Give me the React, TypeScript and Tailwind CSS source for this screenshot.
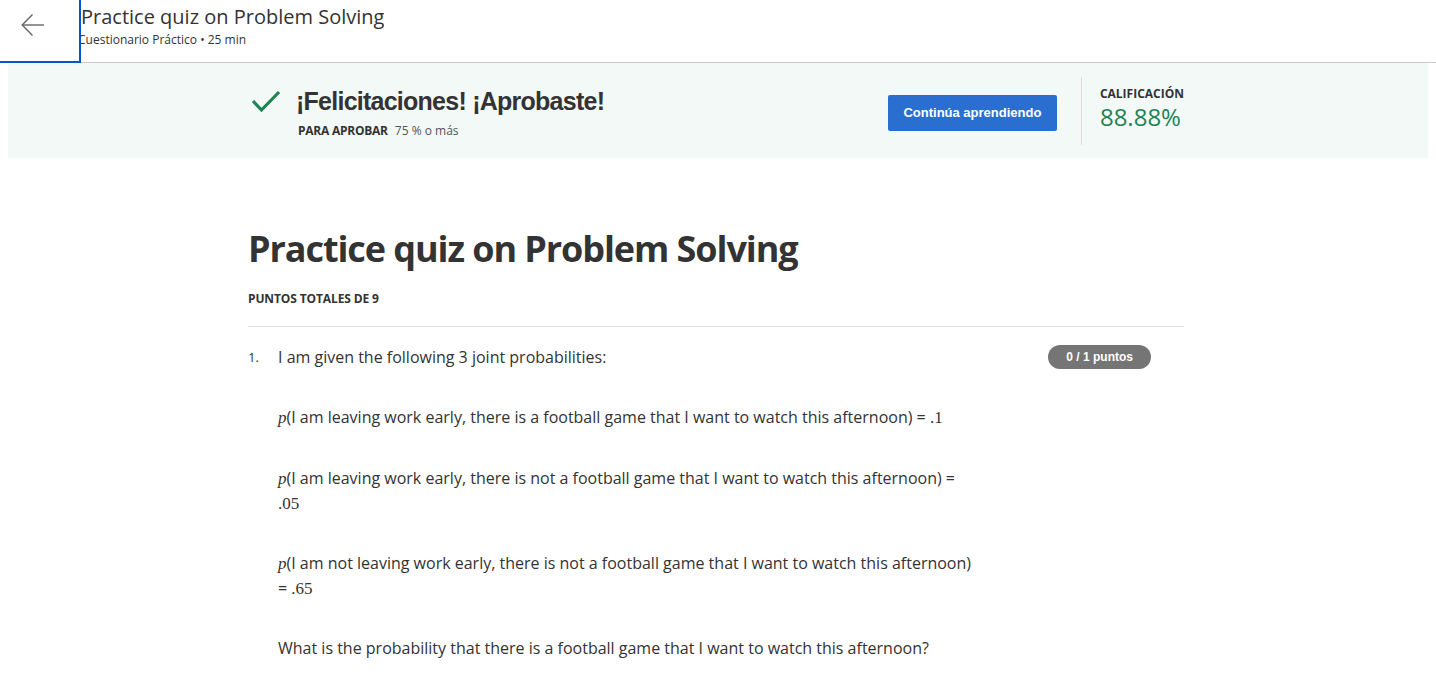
import React from 'react'

const sans = "font-['Open_Sans',sans-serif]"
const arial = "font-['Liberation_Sans',Arial,sans-serif]"

const ArrowLeft = () => (
  <svg width="24" height="24" viewBox="0 0 24 24" fill="none" stroke="#666" strokeWidth="1.4">
    <path d="M23 12H1.5" />
    <path d="M11.5 1.5L1.2 12L11.5 22.5" />
  </svg>
)

const Check = () => (
  <svg width="30" height="24" viewBox="0 0 30 24" fill="none" stroke="#1f8354" strokeWidth="3.2">
    <path d="M2 11l8.5 9L28 2" />
  </svg>
)

const Header = () => (
  <div className="flex h-[63px] border-b border-[#c9c9c9]">
    <button className="-mb-px flex w-[81px] shrink-0 items-start border-r-2 border-b-2 border-[#0056d2] bg-white pl-[21px] pt-[13px]">
      <ArrowLeft />
    </button>
    <div className={`${sans} flex flex-col overflow-hidden pt-[3px] text-[#333]`}>
      <div className="text-[20px] leading-[28px]">Practice quiz on Problem Solving</div>
      <div className="-ml-[3px] text-[12px] leading-[17px]">Cuestionario Práctico • 25 min</div>
    </div>
  </div>
)

const Banner = () => (
  <div className="mx-2 h-[95px] bg-[#f2f9f7]">
    <div className="mx-auto flex h-full w-[940px] items-start pr-1">
      <div className="pt-[27px] pl-[3px]">
        <Check />
      </div>
      <div className="ml-[15px] flex-1 pt-[22px]">
        <div className={`${arial} text-[25px] font-bold leading-[32px] tracking-[-0.03em] text-[#333]`}>¡Felicitaciones! ¡Aprobaste!</div>
        <div className={`${sans} mt-[6px] pl-[2px] text-[12px] leading-[16px] text-[#333]`}>
          <span className="font-bold tracking-[-0.02em]">PARA APROBAR</span>
          <span className="ml-[7px] text-[#555]">75 % o más</span>
        </div>
      </div>
      <div className="pt-[32px]">
        <button className={`${arial} h-[36px] w-[169px] rounded-[2px] bg-[#2a6fd0] text-[13px] font-bold text-white`}>
          Continúa aprendiendo
        </button>
      </div>
      <div className="ml-[24px] mt-[14px] h-[68px] w-px bg-[#dcdcdc]" />
      <div className={`${sans} ml-[18px] pt-[23px] text-[#333]`}>
        <div className="text-[12px] font-bold leading-[16px]">CALIFICACIÓN</div>
        <div className="text-[24px] leading-[30px] text-[#1f8354]">88.88%</div>
      </div>
    </div>
  </div>
)

const P = () => <span className="font-['Liberation_Serif',serif] text-[17px] italic leading-none">p</span>
const Num = ({ v }: { v: string }) => <span className="font-['Liberation_Serif',serif] text-[17px] leading-none">{v}</span>

const Question = () => (
  <div className={`${sans} flex text-[16px] text-[#333]`}>
    <div className="w-[30px] pt-[18px] text-[13px] leading-[24px]">1.</div>
    <div className="flex-1">
      <div className="flex items-start justify-between">
        <div className="pt-[18px] leading-[24px]">I am given the following 3 joint probabilities:</div>
        <div className={`${arial} mr-[33px] mt-[18px] rounded-full bg-[#757575] px-[18px] py-[4px] text-[12px] font-bold leading-[16px] text-white`}>
          0 / 1 puntos
        </div>
      </div>
      <div className="w-[700px] leading-[25px]">
        <p className="mt-[36px]">
          <P />(I am leaving work early, there is a football game that I want to watch this afternoon) = <Num v=".1" />
        </p>
        <p className="mt-[36px]">
          <P />(I am leaving work early, there is not a football game that I want to watch this afternoon) = <Num v=".05" />
        </p>
        <p className="mt-[35px]">
          <P />(I am not leaving work early, there is not a football game that I want to watch this afternoon) = <Num v=".65" />
        </p>
        <p className="mt-[35px]">What is the probability that there is a football game that I want to watch this afternoon?</p>
      </div>
    </div>
  </div>
)

export default function App() {
  return (
    <div className="h-[680px] overflow-hidden bg-white">
      <Header />
      <Banner />
      <div className="mx-auto w-[940px] pr-1 pt-[67px]">
        <h1 className={`${sans} text-[36px] font-bold leading-[48px] tracking-[-0.03em] text-[#333]`}>
          Practice quiz on Problem Solving
        </h1>
        <div className={`${sans} mt-[18px] text-[12px] font-bold leading-[16px] tracking-[-0.01em] text-[#333]`}>PUNTOS TOTALES DE 9</div>
        <div className="mt-[19px] h-px bg-[#e1e1e1]" />
        <Question />
      </div>
    </div>
  )
}
